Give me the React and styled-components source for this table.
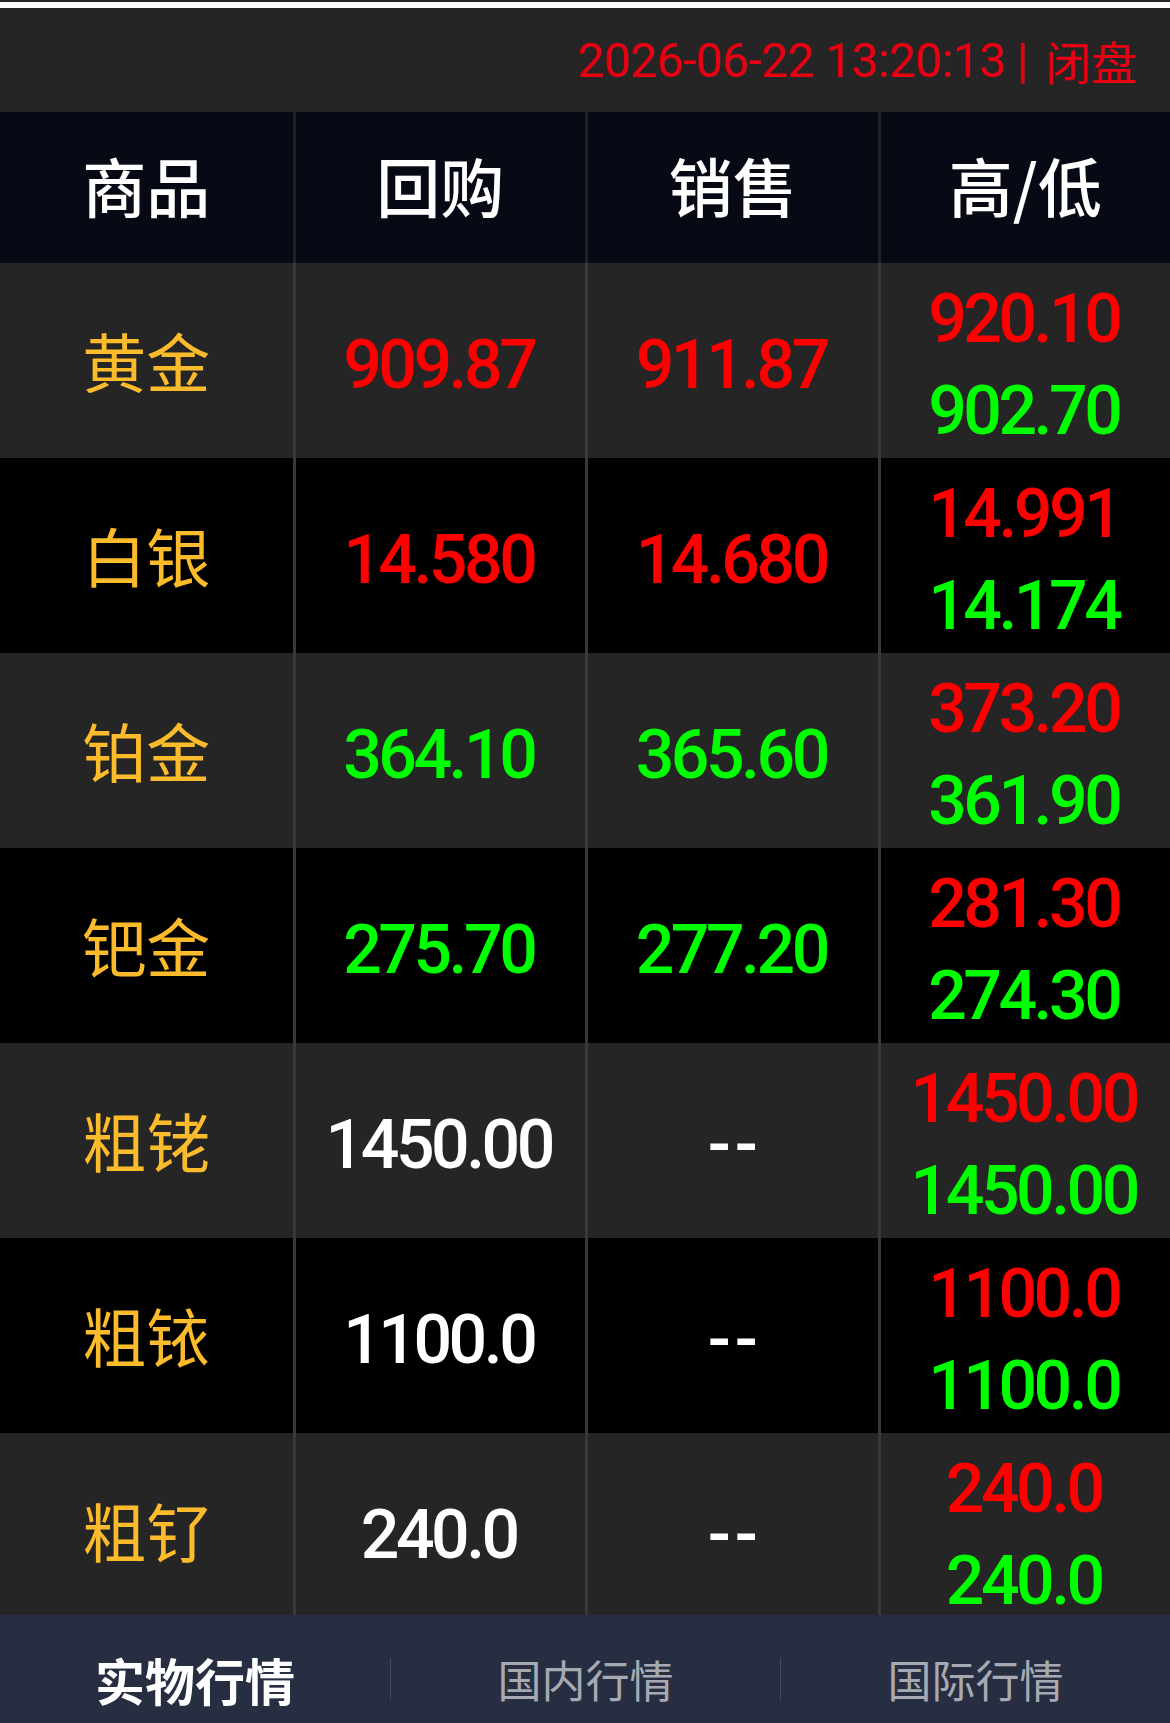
import React from "react";
import styled, { createGlobalStyle } from "styled-components";

const GlobalStyle = createGlobalStyle`
  html, body {
    margin: 0;
    padding: 0;
    background: #252525;
  }
  body {
    font-family: "Noto Sans CJK SC", sans-serif;
  }
`;

const NUM_FONT = `Roboto, "Noto Sans CJK SC", sans-serif`;

const RED = "#ff0000";
const GREEN = "#00ff00";
const WHITE = "#ffffff";

const Page = styled.div`
  width: 1170px;
  height: 1723px;
  display: flex;
  flex-direction: column;
  overflow: hidden;
  background: #252525;
`;

const TopLine = styled.div`
  flex-shrink: 0;
  height: 6px;
  margin-top: 2px;
  background: #ffffff;
`;

const StatusBar = styled.div`
  flex-shrink: 0;
  height: 104px;
  display: flex;
  align-items: center;
  justify-content: flex-end;
  padding-right: 33px;
  color: #e60012;
  font-family: ${NUM_FONT};
  font-size: 48px;
  letter-spacing: -0.6px;
  white-space: pre;
`;

const StatusTag = styled.span`
  font-family: "Noto Sans CJK SC", sans-serif;
  font-size: 46px;
  letter-spacing: 0;
  margin-left: 6px;
`;

const Grid = styled.div`
  display: grid;
  grid-template-columns: repeat(4, 1fr);
`;

const Header = styled(Grid)`
  flex-shrink: 0;
  height: 151px;
  background: #070a14;
`;

const HeadCell = styled.div`
  display: flex;
  align-items: center;
  justify-content: center;
  padding-bottom: 8px;
  box-sizing: border-box;
  color: #ffffff;
  font-size: 64px;
  font-weight: 500;
  & + & {
    border-left: 3px solid #1d2028;
  }
`;

const Body = styled.div`
  flex: 1;
  overflow: hidden;
`;

const Row = styled(Grid)`
  height: 195px;
  background: ${(p) => (p.$alt ? "#000000" : "#252525")};
`;

const Cell = styled.div`
  display: flex;
  flex-direction: column;
  align-items: center;
  justify-content: center;
  padding-top: ${(p) => (p.$label ? 0 : 8)}px;
  padding-bottom: ${(p) => (p.$label ? 4 : 0)}px;
  box-sizing: border-box;
  & + & {
    border-left: 3px solid #383838;
  }
`;

const Label = styled.span`
  color: #fcbb2b;
  font-size: 64px;
`;

const Value = styled.span`
  color: ${(p) => p.$color};
  font-family: ${NUM_FONT};
  font-size: 68px;
  font-weight: 500;
  letter-spacing: -3.5px;
  padding-right: 3px;
  line-height: ${(p) => (p.$stack ? "92px" : "normal")};
`;

const Dash = styled(Value)`
  letter-spacing: 4px;
  padding-left: 4px;
  padding-right: 0;
`;

const TabBar = styled.div`
  flex-shrink: 0;
  height: 108px;
  box-sizing: border-box;
  padding-top: 20px;
  display: grid;
  grid-template-columns: repeat(3, 1fr);
  background: #282e42;
`;

const Tab = styled.div`
  align-self: center;
  height: 42px;
  display: flex;
  align-items: center;
  justify-content: center;
  color: ${(p) => (p.$active ? "#ffffff" : "#a7aab2")};
  font-size: ${(p) => (p.$active ? 50 : 44)}px;
  font-weight: ${(p) => (p.$active ? 700 : 400)};
  & + & {
    border-left: 1px solid #454b5c;
  }
`;

const rows = [
  { name: "黄金", buy: "909.87", sell: "911.87", high: "920.10", low: "902.70", color: RED },
  { name: "白银", buy: "14.580", sell: "14.680", high: "14.991", low: "14.174", color: RED },
  { name: "铂金", buy: "364.10", sell: "365.60", high: "373.20", low: "361.90", color: GREEN },
  { name: "钯金", buy: "275.70", sell: "277.20", high: "281.30", low: "274.30", color: GREEN },
  { name: "粗铑", buy: "1450.00", sell: "--", high: "1450.00", low: "1450.00", color: WHITE },
  { name: "粗铱", buy: "1100.0", sell: "--", high: "1100.0", low: "1100.0", color: WHITE },
  { name: "粗钌", buy: "240.0", sell: "--", high: "240.0", low: "240.0", color: WHITE },
];

const tabs = ["实物行情", "国内行情", "国际行情"];

export default function App() {
  return (
    <Page>
      <GlobalStyle />
      <TopLine />
      <StatusBar>
        {"2026-06-22 13:20:13 | "}
        <StatusTag>闭盘</StatusTag>
      </StatusBar>
      <Header>
        <HeadCell>商品</HeadCell>
        <HeadCell>回购</HeadCell>
        <HeadCell>销售</HeadCell>
        <HeadCell>高/低</HeadCell>
      </Header>
      <Body>
        {rows.map((r, i) => (
          <Row key={r.name} $alt={i % 2 === 1}>
            <Cell $label>
              <Label>{r.name}</Label>
            </Cell>
            <Cell>
              <Value $color={r.color}>{r.buy}</Value>
            </Cell>
            <Cell>
              {r.sell === "--" ? (
                <Dash $color={WHITE}>--</Dash>
              ) : (
                <Value $color={r.color}>{r.sell}</Value>
              )}
            </Cell>
            <Cell>
              <Value $stack $color={RED}>{r.high}</Value>
              <Value $stack $color={GREEN}>{r.low}</Value>
            </Cell>
          </Row>
        ))}
      </Body>
      <TabBar>
        {tabs.map((t, i) => (
          <Tab key={t} $active={i === 0}>
            {t}
          </Tab>
        ))}
      </TabBar>
    </Page>
  );
}
